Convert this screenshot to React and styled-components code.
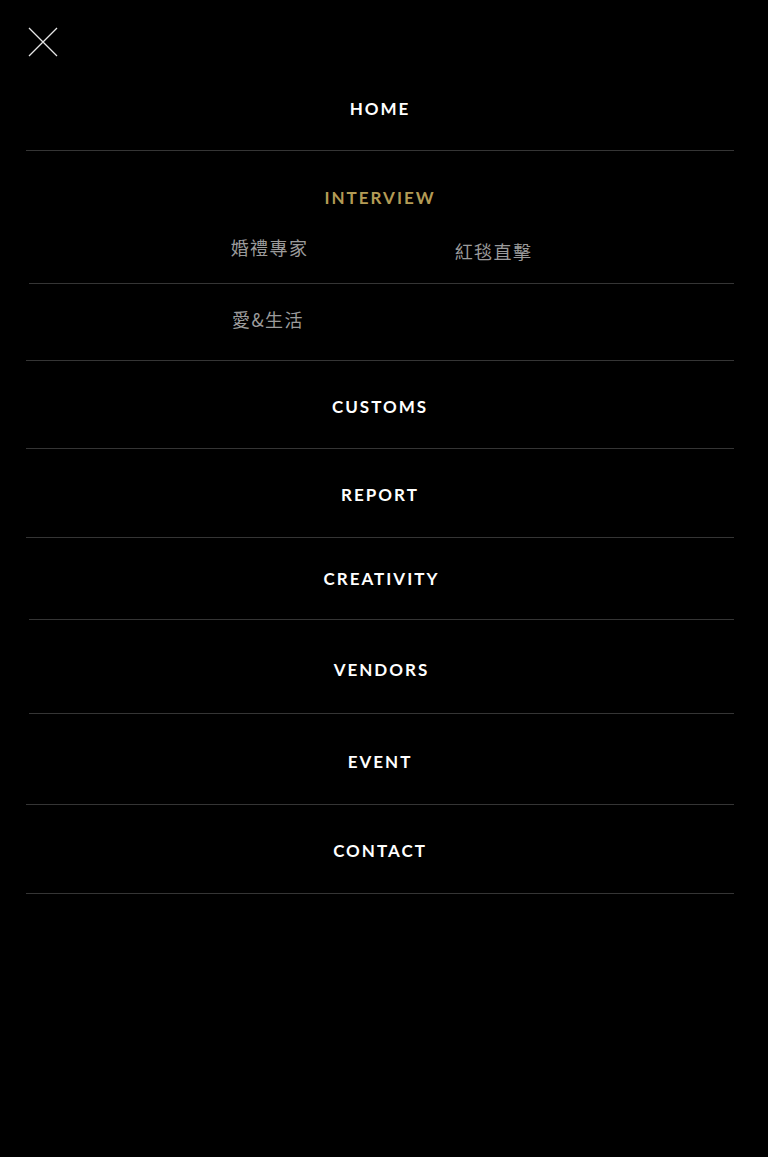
import React from "react";
import styled, { createGlobalStyle } from "styled-components";

const GlobalStyle = createGlobalStyle`
  html, body {
    margin: 0;
    padding: 0;
    background: #000;
  }
`;

const menu = [
  { label: "HOME", h: 88 },
  { label: "CUSTOMS", h: 88 },
  { label: "REPORT", h: 89 },
  { label: "CREATIVITY", h: 82, inset: true, pt: 0 },
  { label: "VENDORS", h: 94, inset: true, pt: 5 },
  { label: "EVENT", h: 91, pt: 5 },
  { label: "CONTACT", h: 89 },
];

const App = () => {
  return (
    <Page>
      <GlobalStyle />
      <CloseButton aria-label="close">
        <svg width="30" height="30" viewBox="0 0 30 30">
          <path d="M1 1 L29 29 M29 1 L1 29" stroke="#e6e6e6" strokeWidth="1.3" fill="none" />
        </svg>
      </CloseButton>
      <Nav>
        <Item $h={menu[0].h}>
          <Label>{menu[0].label}</Label>
        </Item>
        <Interview>
          <Title>INTERVIEW</Title>
          <SubRow $h={69} $inset>
            <SubLink $top={20}>婚禮專家</SubLink>
            <SubLink $top={24}>紅毯直擊</SubLink>
          </SubRow>
          <SubRow $h={76}>
            <SubLink $top={23}>愛&amp;生活</SubLink>
          </SubRow>
        </Interview>
        {menu.slice(1).map((m) => (
          <Item key={m.label} $h={m.h} $inset={m.inset} $pt={m.pt}>
            <Label>{m.label}</Label>
          </Item>
        ))}
      </Nav>
    </Page>
  );
};
export default App;

const Page = styled.div`
  width: 768px;
  min-height: 1157px;
  background: #000;
  padding-top: 27px;
  box-sizing: border-box;
`;

const CloseButton = styled.button`
  display: block;
  margin-left: 28px;
  width: 30px;
  height: 30px;
  padding: 0;
  border: none;
  background: none;
  cursor: pointer;
  svg {
    display: block;
  }
`;

const Nav = styled.ul`
  list-style: none;
  margin: 6px 34px 0 26px;
  padding: 0;
`;

const Item = styled.li`
  height: ${(p) => p.$h}px;
  box-sizing: border-box;
  padding-top: ${(p) => p.$pt ?? 3}px;
  margin-left: ${(p) => (p.$inset ? 3 : 0)}px;
  border-bottom: 1px solid #353535;
  display: flex;
  align-items: center;
  justify-content: center;
`;

const Label = styled.a`
  font-family: Lato, "Open Sans", sans-serif;
  font-weight: 700;
  font-size: 17px;
  letter-spacing: 2px;
  color: #fff;
`;

const Interview = styled.li`
  border-bottom: 1px solid #353535;
`;

const Title = styled.div`
  padding-top: 36px;
  height: 28px;
  text-align: center;
  font-family: Lato, "Open Sans", sans-serif;
  font-weight: 700;
  font-size: 17px;
  letter-spacing: 2px;
  color: #b39b55;
`;

const SubRow = styled.div`
  height: ${(p) => p.$h}px;
  box-sizing: border-box;
  margin-left: ${(p) => (p.$inset ? 3 : 0)}px;
  border-bottom: ${(p) => (p.$inset ? "1px solid #353535" : "none")};
  display: grid;
  grid-template-columns: 224px 224px;
  justify-content: center;
  align-items: start;
`;

const SubLink = styled.a`
  margin-top: ${(p) => p.$top}px;
  text-align: center;
  font-family: "Noto Sans CJK TC", "Noto Sans", sans-serif;
  font-weight: 400;
  font-size: 18px;
  line-height: 24px;
  letter-spacing: 1.4px;
  color: #9b9b9b;
`;
